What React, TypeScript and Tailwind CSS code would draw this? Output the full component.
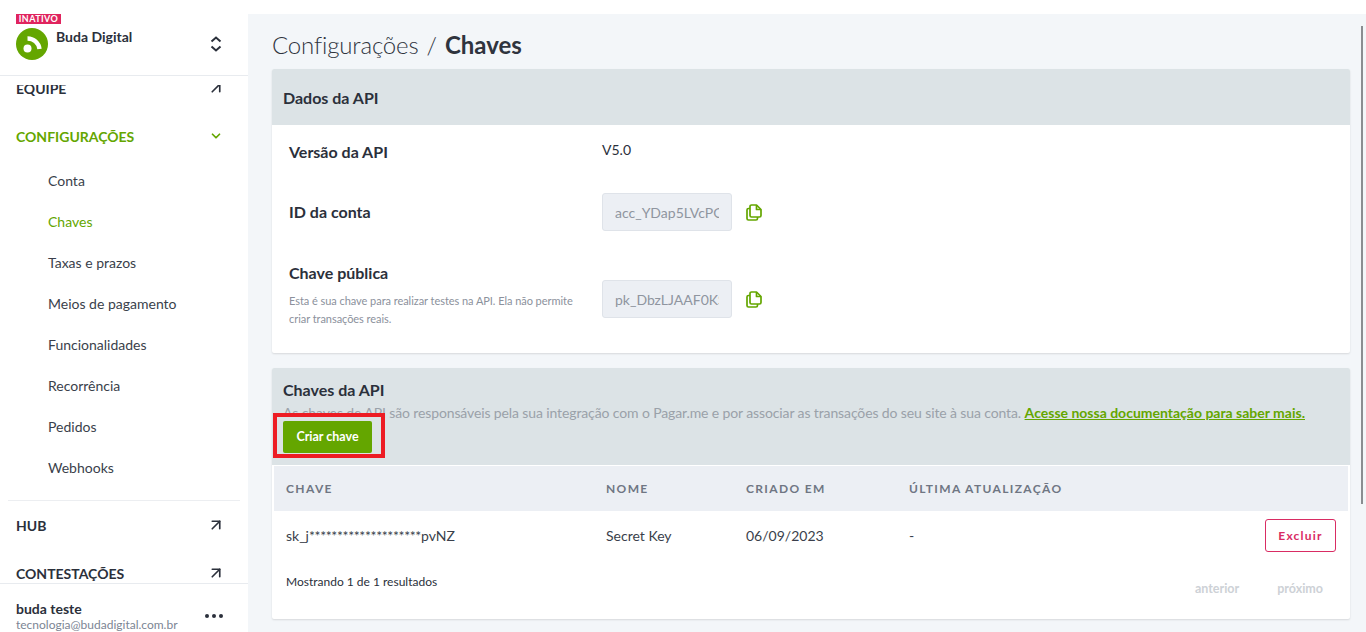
import { ArrowUpRight, ChevronDown } from "lucide-react";

const subItems = ["Conta", "Chaves", "Taxas e prazos", "Meios de pagamento", "Funcionalidades", "Recorrência", "Pedidos", "Webhooks"];

function Logo() {
  return (
    <div className="size-8 rounded-full bg-[#64a600]">
      <svg viewBox="0 0 32 32" className="size-8">
        <circle cx="11.5" cy="20.5" r="4" fill="#fff" />
        <path d="M11.5 10.5 A12 12 0 0 1 23.5 21" fill="none" stroke="#fff" strokeWidth="4.4" />
      </svg>
    </div>
  );
}

function UpDown() {
  return (
    <svg viewBox="0 0 12 16" className="ml-auto mr-[26px] mt-2 h-4 w-3" fill="none" stroke="#2b303b" strokeWidth="2">
      <polyline points="1.5 5.5 6 1.5 10.5 5.5" />
      <polyline points="1.5 10.5 6 14.5 10.5 10.5" />
    </svg>
  );
}

function CopyIcon() {
  return (
    <svg viewBox="0 0 16 17" className="ml-[14px] h-[17px] w-4" fill="none" stroke="#64a600" strokeWidth="1.7" strokeLinejoin="round">
      <path d="M4 4.5H2.5A1.5 1.5 0 0 0 1 6v8.5A1.5 1.5 0 0 0 2.5 16H10a1.5 1.5 0 0 0 1.5-1.5V13" />
      <path d="M5.5 1h5L15 5.5v6a1.5 1.5 0 0 1-1.5 1.5h-8A1.5 1.5 0 0 1 4 11.5v-9A1.5 1.5 0 0 1 5.5 1Z" />
      <path d="M10.5 1v4.5H15" />
    </svg>
  );
}

function NavRow({ label, green, chevron, className }: { label: string; green?: boolean; chevron?: boolean; className: string }) {
  return (
    <div className={`flex h-6 items-center justify-between pl-4 pr-[22px] text-[14px] font-bold ${green ? "text-[#64a600]" : "text-[#2b303b]"} ${className}`}>
      {label}
      <span className="flex w-5 justify-center">
        {chevron ? <ChevronDown className="size-3.5" strokeWidth={3} /> : <ArrowUpRight className="size-[18px]" strokeWidth={2.2} />}
      </span>
    </div>
  );
}

function Sidebar() {
  return (
    <aside className="flex h-[632px] w-[248px] shrink-0 flex-col bg-white">
      <div className="h-[76px] shrink-0 border-b border-[#e8ebef] pl-4">
        <div className="mt-[14px] flex h-[10px] w-[45px] items-center justify-center bg-[#e0245e] text-[9px] font-bold tracking-[0.4px] text-white">INATIVO</div>
        <div className="mt-1 flex">
          <Logo />
          <span className="ml-2 -mt-[3px] text-[14px] leading-[24px] font-bold text-[#2b303b]">Buda Digital</span>
          <UpDown />
        </div>
      </div>
      <div className="mt-[9px] min-h-0 flex-1 overflow-hidden">
        <NavRow label="EQUIPE" className="-mt-[9px]" />
        <NavRow label="CONFIGURAÇÕES" green chevron className="mt-6" />
        <ul className="mt-[21px] flex flex-col gap-[17px] pl-12 text-[14px]">
          {subItems.map((s) => (
            <li key={s} className={s === "Chaves" ? "h-6 leading-6 text-[#64a600]" : "h-6 leading-6 text-[#3a3f4b]"}>
              {s}
            </li>
          ))}
        </ul>
        <div className="mx-2 mt-5 border-t border-[#eceef1]" />
        <NavRow label="HUB" className="mt-[12px]" />
        <NavRow label="CONTESTAÇÕES" className="mt-6" />
      </div>
      <div className="flex h-[49px] shrink-0 items-start justify-between border-t border-[#e8ebef] pl-4 pr-[25px] pt-[17px]">
        <div>
          <div className="text-[14px] leading-4 font-bold text-[#2b303b]">buda teste</div>
          <div className="text-[12px] leading-4 text-[#7c8594]">tecnologia@budadigital.com.br</div>
        </div>
        <div className="mt-[13px] flex gap-[3px]">
          <i className="size-[4px] rounded-full bg-[#2b303b]" />
          <i className="size-[4px] rounded-full bg-[#2b303b]" />
          <i className="size-[4px] rounded-full bg-[#2b303b]" />
        </div>
      </div>
    </aside>
  );
}

function KeyField({ value }: { value: string }) {
  return (
    <div className="flex items-center">
      <input
        readOnly
        value={value}
        className="h-[38px] w-[130px] rounded-[3px] border border-[#dfe3e9] bg-[#eceff4] px-[12px] text-[14px] text-[#8f959f] outline-none"
      />
      <CopyIcon />
    </div>
  );
}

function Main() {
  return (
    <main className="mt-[14px] min-w-0 flex-1 bg-[#f3f6f9] pl-6 pr-4">
      <h1 className="flex h-[55px] items-center pt-[7px] text-[24px] text-[#2f343e]">
        <span className="font-light tracking-[-0.15px]">Configurações</span>
        <span className="mx-[8px] font-light">/</span>
        <span className="font-bold">Chaves</span>
      </h1>
      <section className="w-[1078px] rounded-[2px] bg-white shadow-[0_1px_2px_rgba(0,0,0,0.12)]">
        <div className="flex h-[56px] items-center rounded-t-[2px] bg-[#dce3e6] px-[11px] pt-[2px] text-[16px] font-bold text-[#2b303b]">Dados da API</div>
        <div className="h-[228px] pl-[17px]">
          <div className="flex h-[56px] pt-[14px]">
            <div className="w-[313px] text-[16px] leading-[26px] font-bold text-[#2b303b]">Versão da API</div>
            <div className="text-[14px] leading-[22px] text-[#2b303b]">V5.0</div>
          </div>
          <div className="mt-[12px] flex items-center">
            <div className="w-[313px] text-[16px] font-bold text-[#2b303b]">ID da conta</div>
            <KeyField value="acc_YDap5LVcPQ" />
          </div>
          <div className="mt-[31px] flex items-start">
            <div className="w-[313px]">
              <div className="text-[16px] leading-[22px] font-bold text-[#2b303b]">Chave pública</div>
              <p className="mt-[8px] w-[295px] text-[11px] leading-[18px] tracking-[-0.05px] text-[#8b919c]">Esta é sua chave para realizar testes na API. Ela não permite criar transações reais.</p>
            </div>
            <div className="mt-[18px]">
              <KeyField value="pk_DbzLJAAF0KS" />
            </div>
          </div>
        </div>
      </section>
      <section className="mt-[15px] w-[1078px] rounded-[2px] bg-white shadow-[0_1px_2px_rgba(0,0,0,0.12)]">
        <div className="h-[97px] rounded-t-[2px] bg-[#dce3e6] pl-[11px]">
          <div className="pt-[11px] text-[16px] leading-[22px] font-bold text-[#2b303b]">Chaves da API</div>
          <p className="mt-[1px] whitespace-nowrap text-[14px] leading-[22px] text-[#9aa1a9]">
            <span className="tracking-[-0.12px]">As chaves de API são responsáveis pela sua integração com o Pagar.me e por associar as transações do seu site à sua conta.</span>{" "}
            <a className="font-bold text-[#64a600] underline">Acesse nossa documentação para saber mais.</a>
          </p>
          <div className="relative -ml-[10px] -mt-[11px] h-[45px] w-[112px] border-[4px] border-[#ed1c24] bg-[#dce3e6] pl-[6px] pt-[4px]">
            <button className="h-[32px] w-[89px] rounded-[2px] bg-[#64a600] text-[12.5px] font-bold text-white">Criar chave</button>
          </div>
        </div>
        <div className="mx-[2px] border-t border-white">
          <div className="grid h-[45px] grid-cols-[320px_140px_163px_1fr] items-center bg-[#eceff4] pl-3 text-[12px] font-bold tracking-[1.35px] text-[#6f7683]">
            <span>CHAVE</span>
            <span>NOME</span>
            <span>CRIADO EM</span>
            <span>ÚLTIMA ATUALIZAÇÃO</span>
          </div>
          <div className="grid h-[48px] grid-cols-[320px_140px_163px_1fr_auto] items-center px-3 text-[14px] text-[#3a3f4b]">
            <span>
              sk_j<span className="tracking-[-0.35px]">********************</span>pvNZ
            </span>
            <span>Secret Key</span>
            <span>06/09/2023</span>
            <span>-</span>
            <button className="h-[33px] w-[71px] rounded-[3px] border border-[#d92c63] pt-[1px] text-[12px] font-bold tracking-[1.2px] text-[#d92c63]">Excluir</button>
          </div>
          <div className="flex h-[60px] justify-between pl-3 pr-[25px]">
            <span className="pt-[13px] text-[12px] leading-[20px] text-[#2b303b]">Mostrando 1 de 1 resultados</span>
            <div className="flex gap-[38px] pt-[20px] text-[12.5px] leading-[20px] font-bold text-[#cdd1d6]">
              <span>anterior</span>
              <span>próximo</span>
            </div>
          </div>
        </div>
      </section>
    </main>
  );
}

export default function App() {
  return (
    <div className="relative flex h-[632px] w-[1366px] overflow-hidden bg-white font-['Lato',sans-serif]">
      <Sidebar />
      <Main />
      <div className="absolute right-[3px] top-[26px] h-[478px] w-[2px] bg-[#8a8d91]" />
    </div>
  );
}
